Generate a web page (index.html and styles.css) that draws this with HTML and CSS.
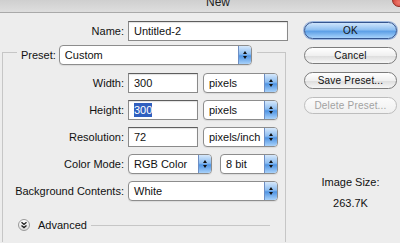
FILE: index.html
```html
<!DOCTYPE html>
<html lang="en">
<head>
    <meta charset="UTF-8">
    <title>New</title>
    <link rel="stylesheet" href="styles.css">
</head>
<body>

	<div class="titlebar">
		<span class="title">New</span>
		<span class="close"></span>
	</div>

	<div class="dialog">
		<div class="main">
			<div class="name_row">
				<label class="lbl">Name:</label>
				<div class="input name_input">Untitled-2</div>
			</div>

			<div class="group">
				<div class="group_head">
					<label class="lbl">Preset:</label>
					<div class="select preset"><span class="val">Custom</span><span class="stepper"></span></div>
				</div>

				<div class="fields">
					<label class="lbl">Width:</label>
					<div class="pair">
						<div class="input num">300</div>
						<div class="select unit"><span class="val">pixels</span><span class="stepper"></span></div>
					</div>

					<label class="lbl">Height:</label>
					<div class="pair">
						<div class="input num"><span class="sel">300</span></div>
						<div class="select unit"><span class="val">pixels</span><span class="stepper"></span></div>
					</div>

					<label class="lbl">Resolution:</label>
					<div class="pair">
						<div class="input num">72</div>
						<div class="select unit"><span class="val">pixels/inch</span><span class="stepper"></span></div>
					</div>

					<label class="lbl">Color Mode:</label>
					<div class="pair wide_gap">
						<div class="select mode"><span class="val">RGB Color</span><span class="stepper"></span></div>
						<div class="select bits"><span class="val">8 bit</span><span class="stepper"></span></div>
					</div>

					<label class="lbl">Background Contents:</label>
					<div class="pair">
						<div class="select bg"><span class="val">White</span><span class="stepper"></span></div>
					</div>
				</div>

				<div class="advanced">
					<span class="adv_icon">
						<svg width="8" height="8" viewBox="0 0 8 8"><path d="M1.5 1.2 L4 3.4 L6.5 1.2 M1.5 4.4 L4 6.6 L6.5 4.4" fill="none" stroke="#222" stroke-width="1.3"/></svg>
					</span>
					<span class="adv_text">Advanced</span>
					<span class="adv_line"></span>
				</div>
			</div>
		</div>

		<div class="side">
			<div class="btn ok">OK</div>
			<div class="btn">Cancel</div>
			<div class="btn">Save Preset...</div>
			<div class="btn disabled">Delete Preset...</div>

			<div class="img_size">Image Size:</div>
			<div class="img_val">263.7K</div>
		</div>
	</div>

</body>
</html>
```

FILE: styles.css
```css
	*{
		margin: 0;
		padding: 0;
		box-sizing: border-box;
	}
    body {
        font-family: "Liberation Sans", Arial, sans-serif;
        font-size: 11px;
        color: #111;
        width: 400px;
        height: 243px;
        overflow: hidden;
        background-color: #ededed;
    }
    .titlebar {
    	display: flex;
    	height: 13px;
    	overflow: hidden;
    	background: linear-gradient(#cfcfcf, #dedede);
    	border-bottom: 1px solid #a9a9a9;
    }
    .title {
    	flex: 1;
    	text-align: center;
    	padding-left: 44px;
    	margin-top: -5px;
    	font-size: 12px;
    	line-height: 14px;
    	color: #222;
    }
    .close {
    	width: 14px;
    	height: 14px;
    	margin: -7px -6px 0 0;
    	border-radius: 50%;
    	background: radial-gradient(circle at 50% 70%, #f07a6e, #c0281c);
    	border: 1px solid #8e2a20;
    }

    .dialog {
    	display: flex;
    }
    .main {
    	width: 290px;
    }
    .lbl {
    	text-align: right;
    	white-space: nowrap;
    	line-height: 20px;
    }
    .name_row {
    	display: grid;
    	grid-template-columns: 124px 160px;
    	column-gap: 4px;
    	margin-top: 8px;
    }

    .input {
    	height: 20px;
    	line-height: 18px;
    	padding-left: 5px;
    	background-color: #fff;
    	border: 1px solid #8a8a8a;
    	border-top-color: #5e5e5e;
    	box-shadow: inset 0 1px 1px rgba(0,0,0,0.12);
    	white-space: nowrap;
    }
    .num {
    	width: 70px;
    }
    .sel {
    	background-color: #2f5fbf;
    	color: #fff;
    	padding: 1px 0;
    }

    .select {
    	display: flex;
    	height: 20px;
    	background-color: #fff;
    	border: 1px solid #8d8d8d;
    	border-radius: 4px;
    	box-shadow: 0 1px 1px rgba(0,0,0,0.08);
    	overflow: hidden;
    }
    .select .val {
    	flex: 1;
    	line-height: 18px;
    	padding-left: 5px;
    	white-space: nowrap;
    }
    .stepper {
    	width: 13px;
    	display: flex;
    	flex-flow: column;
    	align-items: center;
    	justify-content: center;
    	gap: 2px;
    	border-left: 1px solid #6d8ec4;
    	background: linear-gradient(#d6e8fb, #8cbdf1 45%, #4f94e3 55%, #a9d2fa);
    }
    .stepper::before,
    .stepper::after {
    	content: "";
    	width: 0;
    	height: 0;
    	border-left: 2.5px solid transparent;
    	border-right: 2.5px solid transparent;
    }
    .stepper::before {
    	border-bottom: 3px solid #111;
    }
    .stepper::after {
    	border-top: 3px solid #111;
    }

    .group {
    	margin-top: 11px;
    	margin-left: 2px;
    	width: 284px;
    	border: 1px solid #c6c6c6;
    	border-bottom: none;
    	padding-bottom: 11px;
    }
    .group_head {
    	display: flex;
    	align-items: center;
    	gap: 3px;
    	width: fit-content;
    	margin: -8px 0 0 14px;
    	padding: 0 5px 0 4px;
    	background-color: #ededed;
    }
    .preset {
    	width: 193px;
    }

    .fields {
    	display: grid;
    	grid-template-columns: 121px auto;
    	column-gap: 4px;
    	row-gap: 7px;
    	margin-top: 8px;
    }
    .pair {
    	display: flex;
    	gap: 5px;
    }
    .wide_gap {
    	gap: 8px;
    }
    .unit {
    	width: 75px;
    }
    .mode {
    	width: 84px;
    }
    .bits {
    	width: 58px;
    }
    .bg {
    	width: 150px;
    }

    .advanced {
    	display: flex;
    	align-items: center;
    	height: 12px;
    	margin-top: 18px;
    	padding: 0 15px;
    }
    .adv_icon {
    	display: flex;
    	align-items: center;
    	justify-content: center;
    	width: 12px;
    	height: 12px;
    	border-radius: 50%;
    	border: 1px solid #9a9a9a;
    	background: linear-gradient(#ffffff, #dcdcdc);
    }
    .adv_text {
    	margin-left: 8px;
    	line-height: 12px;
    }
    .adv_line {
    	flex: 1;
    	margin-left: 4px;
    	border-top: 1px solid #c6c6c6;
    }

    .side {
    	display: flex;
    	flex-flow: column;
    	margin-left: 14px;
    	width: 93px;
    	padding-top: 9px;
    }
    .btn {
    	height: 17px;
    	margin-bottom: 8px;
    	line-height: 15px;
    	text-align: center;
    	font-size: 10px;
    	letter-spacing: 0.2px;
    	border: 1px solid #7c7c7c;
    	border-radius: 9px;
    	background: linear-gradient(#ffffff, #f0f0f0 50%, #dedede 55%, #f6f6f6);
    }
    .ok {
    	border-color: #35558f;
    	background: linear-gradient(#cfe5fc, #8fc0f2 45%, #5c9fe6 55%, #a8d3fb);
    	box-shadow: 0 0 0 1px #9cb6dd;
    }
    .disabled {
    	color: #a2a2a2;
    	border-color: #bdbdbd;
    	background: linear-gradient(#fbfbfb, #f0f0f0);
    }
    .img_size {
    	margin-top: 53px;
    	text-align: center;
    	line-height: 14px;
    }
    .img_val {
    	margin-top: 7px;
    	text-align: center;
    	line-height: 14px;
    }
```
